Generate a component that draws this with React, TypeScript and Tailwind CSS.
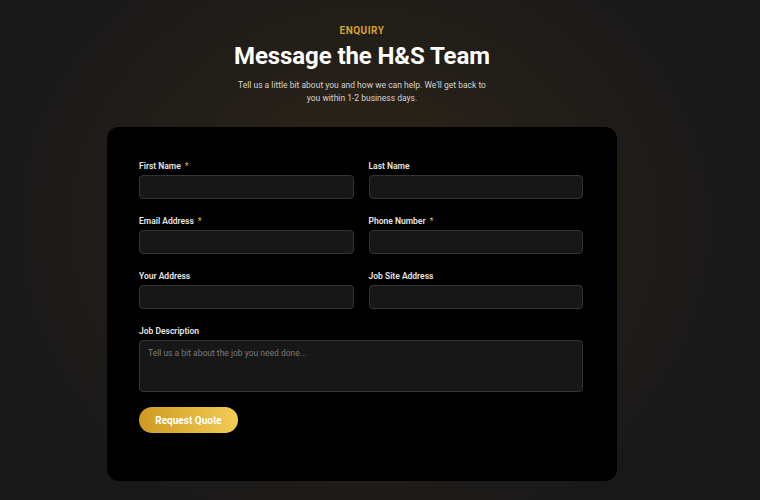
export default function App() {
  const rows: { label: string; required?: boolean }[][] = [
    [{ label: 'First Name', required: true }, { label: 'Last Name' }],
    [{ label: 'Email Address', required: true }, { label: 'Phone Number', required: true }],
    [{ label: 'Your Address' }, { label: 'Job Site Address' }],
  ];

  return (
    <div
      className="w-[760px] h-[500px] overflow-hidden bg-[radial-gradient(ellipse_360px_320px_at_48%_45%,#31291b_0%,#241f18_50%,#1a1919_100%)] pr-[36px] flex flex-col items-center"
      style={{ fontFamily: 'Roboto, "Liberation Sans", sans-serif' }}
    >
      {/* Header */}
      <div className="pt-[25px] flex flex-col items-center text-center">
        <span className="text-[10px] font-bold tracking-[0.5px] text-[#d2a52e] leading-[12px]">
          ENQUIRY
        </span>
        <h1 className="mt-[5px] text-[24px] font-bold text-white leading-[28px] tracking-[-0.1px]">
          Message the H&amp;S Team
        </h1>
        <p className="mt-[9px] w-[260px] text-[8.5px] leading-[13px] text-[#d6d3cf]">
          Tell us a little bit about you and how we can help. We'll get back to you within 1-2 business days.
        </p>
      </div>

      {/* Form card */}
      <div className="mt-[22px] w-[510px] h-[354px] bg-black rounded-[12px] pl-[32px] pr-[34px] pt-[34px]">
        <div className="flex flex-col gap-[17px]">
          {rows.map((row, i) => (
            <div key={i} className="grid grid-cols-2 gap-x-[15px]">
              {row.map((f) => (
                <div key={f.label} className="flex flex-col gap-[4px]">
                  <label className="text-[8.5px] font-semibold text-[#e8e6e3] leading-[10px]">
                    {f.label}
                    {f.required && <span className="ml-[4px] text-[#d2a52e]">*</span>}
                  </label>
                  <div className="h-[24px] rounded-[4px] bg-[#181717] border border-[#353333]" />
                </div>
              ))}
            </div>
          ))}
          <div className="flex flex-col gap-[4px]">
            <label className="text-[8.5px] font-semibold text-[#e8e6e3] leading-[10px]">
              Job Description
            </label>
            <div className="h-[52px] rounded-[4px] bg-[#181717] border border-[#353333] px-[8px] pt-[6px] text-[8.5px] leading-[12px] text-[#7d7a77]">
              Tell us a bit about the job you need done...
            </div>
          </div>
        </div>
        <button className="mt-[15px] w-[99px] h-[26px] rounded-full bg-[linear-gradient(90deg,#cf9a22,#f2cc55)] text-white text-[10px] font-bold">
          Request Quote
        </button>
      </div>
    </div>
  );
}
